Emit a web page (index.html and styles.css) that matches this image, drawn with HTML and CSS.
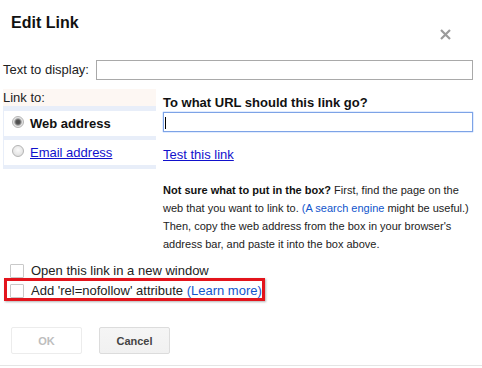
FILE: index.html
```html
<!DOCTYPE html>
<html>
<head>
<meta charset="utf-8">
<link rel="stylesheet" href="styles.css">
</head>
<body>
<div class="dialog">
  <div class="header">
    <div class="title">Edit Link</div>
    <svg class="close" width="11" height="11" viewBox="0 0 11 11"><path d="M1 1 L10 10 M10 1 L1 10" stroke="#9b9b9b" stroke-width="2.2" fill="none"/></svg>
  </div>
  <div class="display-row">
    <span class="display-label">Text to display:</span>
    <div class="field"></div>
  </div>
  <div class="link-section">
    <div class="nav">
      <div class="nav-label">Link to:</div>
      <div class="nav-list">
        <div class="nav-item"><span class="radio checked"></span><span class="nav-text">Web address</span></div>
        <div class="nav-item"><span class="radio"></span><a class="link">Email address</a></div>
      </div>
    </div>
    <div class="pane">
      <div class="pane-title">To what URL should this link go?</div>
      <div class="field url"><span class="caret"></span></div>
      <a class="link test">Test this link</a>
      <div class="help">
        <div class="line"><b>Not sure what to put in the box?</b> First, find the page on the</div>
        <div class="line">web that you want to link to. <span class="blue">(A search engine</span> might be useful.)</div>
        <div class="line">Then, copy the web address from the box in your browser's</div>
        <div class="line">address bar, and paste it into the box above.</div>
      </div>
    </div>
  </div>
  <div class="options">
    <div class="option"><span class="checkbox"></span><span>Open this link in a new window</span></div>
    <div class="option highlighted"><span class="checkbox"></span><span>Add 'rel=nofollow' attribute <span class="blue">(Learn more)</span></span></div>
  </div>
  <div class="buttons">
    <button class="btn disabled">OK</button>
    <button class="btn">Cancel</button>
  </div>
  <div class="footer-line"></div>
</div>
</body>
</html>
```
FILE: styles.css
```css
html, body {
  margin: 0;
  padding: 0;
  background: #fff;
}
body {
  font-family: "Liberation Sans", Arial, sans-serif;
  font-size: 13px;
  color: #222;
}
.dialog {
  padding-top: 14px;
}
.header {
  height: 46px;
  display: flex;
  justify-content: space-between;
  align-items: flex-start;
  padding: 0 31px 0 11px;
  box-sizing: border-box;
}
.title {
  font-size: 16px;
  font-weight: bold;
  line-height: 18px;
  color: #111;
}
.close {
  margin-top: 15px;
  display: block;
}
.display-row {
  display: flex;
  align-items: flex-start;
  padding-left: 3px;
  height: 20px;
}
.display-label {
  width: 93px;
  padding-top: 2px;
  line-height: 15px;
}
.field {
  width: 377px;
  height: 20px;
  box-sizing: border-box;
  border: 1px solid #a9a9a9;
  background: #fff;
}
.link-section {
  display: flex;
  align-items: flex-start;
  gap: 7px;
  margin-top: 9px;
  padding-left: 3px;
}
.nav {
  width: 153px;
}
.nav-label {
  line-height: 15px;
  padding: 1px 0;
  background: #fdf7f3;
}
.nav-list {
  background: #e8eef9;
  padding: 5px 0 4px 1px;
  display: flex;
  flex-direction: column;
  gap: 4px;
}
.nav-item {
  height: 25px;
  box-sizing: border-box;
  background: #fff;
  padding: 5px 0 0 8px;
  display: flex;
  align-items: flex-start;
  gap: 6px;
  line-height: 15px;
}
.nav-text {
  font-weight: bold;
  color: #111;
}
.radio {
  width: 12px;
  height: 12px;
  box-sizing: border-box;
  border-radius: 50%;
  border: 1px solid #b4b4b4;
  background: radial-gradient(circle at 50% 40%, #fafafa 0, #e6e6e6 60%, #d2d2d2 100%);
  flex: none;
}
.radio.checked {
  background: radial-gradient(circle, #4a4a4a 0, #555 2px, #999 3.2px, #e2e2e2 4.2px, #f2f2f2 100%);
}
.link {
  color: #1111cc;
  text-decoration: underline;
  cursor: pointer;
}
.pane {
  width: 310px;
  padding-top: 6px;
}
.pane-title {
  font-weight: bold;
  line-height: 15px;
  color: #111;
}
.field.url {
  width: 310px;
  margin-top: 2px;
  border: 1px solid #7da3e6;
  box-shadow: 0 0 1px #4d90fe;
}
.caret {
  display: block;
  width: 1px;
  height: 12px;
  margin: 4px 0 0 1px;
  background: #000;
}
.test {
  display: block;
  width: fit-content;
  margin-top: 15px;
  line-height: 15px;
}
.help {
  margin-top: 19px;
  font-size: 11px;
  line-height: 18px;
  color: #222;
}
.help .line {
  white-space: nowrap;
}
.help b {
  color: #111;
}
.blue {
  color: #1155cc;
}
.options {
  margin-top: 11px;
}
.option {
  display: flex;
  align-items: center;
  gap: 7px;
  height: 14px;
  line-height: 14px;
  padding-left: 10px;
}
.option.highlighted {
  height: auto;
  width: 261px;
  box-sizing: border-box;
  margin-left: 4px;
  padding: 3px 0 0 3px;
  border: 3px solid #e3141c;
  box-shadow: 1px 1px 2px rgba(0, 0, 0, 0.3);
}
.checkbox {
  width: 14px;
  height: 14px;
  box-sizing: border-box;
  border: 1px solid #c9c9c9;
  border-radius: 1px;
  background: #fff;
  flex: none;
}
.buttons {
  display: flex;
  gap: 17px;
  margin-top: 26px;
  padding-left: 11px;
}
.btn {
  width: 71px;
  height: 27px;
  box-sizing: border-box;
  font-family: "Liberation Sans", Arial, sans-serif;
  font-size: 11px;
  font-weight: bold;
  color: #444;
  background: linear-gradient(#f5f5f5, #f1f1f1);
  border: 1px solid #dcdcdc;
  border-radius: 2px;
  padding: 0;
}
.btn.disabled {
  background: #fff;
  border-color: #ececec;
  color: #bdbdbd;
}
.footer-line {
  margin-top: 11px;
  border-top: 1px solid #e5e5e5;
}
```
